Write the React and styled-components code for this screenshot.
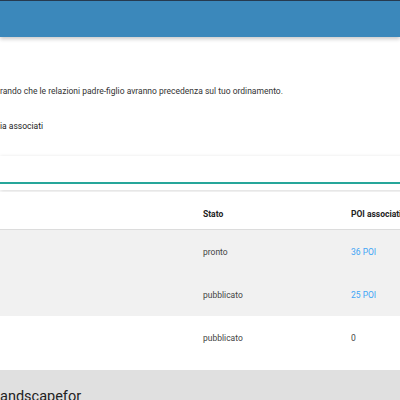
import React from "react";
import styled, { createGlobalStyle } from "styled-components";

const GlobalStyle = createGlobalStyle`
  html, body {
    margin: 0;
    padding: 0;
    background: #ffffff;
    font-family: Roboto, "Liberation Sans", sans-serif;
    overflow: hidden;
  }
`;

const Page = styled.div`
  width: 400px;
  height: 400px;
  display: flex;
  flex-direction: column;
  overflow: hidden;

  & > * {
    flex-shrink: 0;
  }
`;

const TopBar = styled.header`
  height: 36px;
  border-top: 1px solid #263a4f;
  background-color: #3b88bb;
  box-shadow: 0 2px 4px rgba(0, 0, 0, 0.22);
  position: relative;
  z-index: 2;
`;

const Intro = styled.section`
  display: flex;
  flex-direction: column;
  padding-top: 49px;
  gap: 24px;
`;

const Text = styled.p`
  margin: 0;
  font-size: 8.5px;
  line-height: 11px;
  white-space: nowrap;
  color: ${(p) => (p.$strong ? "#222" : "#333")};
`;

const SearchCard = styled.div`
  margin-top: 24px;
  margin-right: -20px;
  height: 34px;
  background: #fff;
  box-shadow: 0 1px 4px rgba(0, 0, 0, 0.16);
  display: flex;
  flex-direction: column;
  justify-content: flex-end;
  padding-bottom: 6px;
  box-sizing: border-box;
`;

const SearchInput = styled.input`
  display: block;
  width: 100%;
  box-sizing: border-box;
  border: 0;
  border-bottom: 2px solid #26a69a;
  outline: none;
  height: 20px;
  padding: 0;
  background: transparent;
  font-family: inherit;
  font-size: 9px;
  color: #333;
`;

const Table = styled.div`
  margin-top: 2px;
  padding-bottom: 11px;
  display: flex;
  flex-direction: column;
`;

const Row = styled.div`
  display: grid;
  grid-template-columns: 203px 148px 1fr;
  align-items: center;
  height: ${(p) => (p.$head ? "37px" : "43px")};
  background: ${(p) => (p.$shaded ? "#f1f1f1" : "#fff")};
  border-bottom: ${(p) => (p.$head ? "1px solid #dcdcdc" : "none")};
`;

const Cell = styled.div`
  font-size: 8.5px;
  white-space: nowrap;
  color: ${(p) => (p.$head ? "#222" : p.$link ? "#42a5f5" : "#444")};
  font-weight: ${(p) => (p.$head ? 700 : 400)};
  padding-top: ${(p) => (p.$head ? "6px" : "0")};
`;

const Section = styled.section`
  flex: 1;
  background: #e0e0e0;
  padding-top: 18px;
`;

const SectionTitle = styled.h2`
  margin: 0;
  font-size: 14.5px;
  font-weight: 400;
  color: #222;
  line-height: 18px;
  white-space: nowrap;
`;

const rows = [
  { stato: "pronto", poi: "36 POI", link: true, shaded: true },
  { stato: "pubblicato", poi: "25 POI", link: true, shaded: true },
  { stato: "pubblicato", poi: "0", link: false, shaded: false },
];

export default function App() {
  return (
    <Page>
      <GlobalStyle />
      <TopBar />
      <Intro>
        <Text>
          rando che le relazioni padre-figlio avranno precedenza sul tuo
          ordinamento.
        </Text>
        <Text $strong>ia associati</Text>
      </Intro>
      <SearchCard>
        <SearchInput />
      </SearchCard>
      <Table>
        <Row $head>
          <Cell $head />
          <Cell $head>Stato</Cell>
          <Cell $head>POI associati</Cell>
        </Row>
        {rows.map((r, i) => (
          <Row key={i} $shaded={r.shaded}>
            <Cell />
            <Cell>{r.stato}</Cell>
            <Cell $link={r.link}>{r.poi}</Cell>
          </Row>
        ))}
      </Table>
      <Section>
        <SectionTitle>andscapefor</SectionTitle>
      </Section>
    </Page>
  );
}
